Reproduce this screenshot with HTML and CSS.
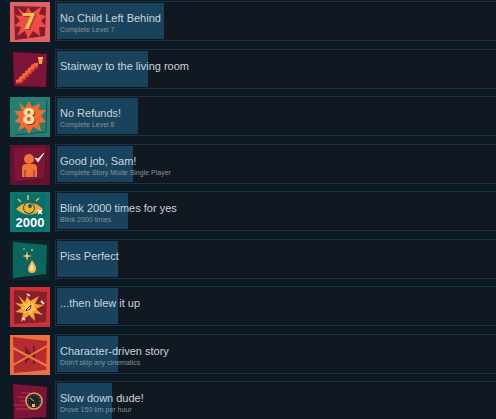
FILE: index.html
```html
<!DOCTYPE html>
<html lang="en">
<head>
<meta charset="utf-8">
<title>Achievements</title>
<link rel="stylesheet" href="styles.css">
</head>
<body>
<main class="achievements">
  <article class="row">
    <svg class="icon" viewBox="0 0 40 40" aria-hidden="true">
      <rect width="40" height="40" fill="#df6264"/>
      <path d="M4 4 36 5 35 34 5 38Z" fill="#851c2d"/>
      <path d="M7 5 15 12 18 5 22 11 32 4 29 12 36 14 31 19 37 25 29 25 30 34 23 29 18 37 15 29 7 34 11 25 4 24 10 19 5 13 12 14Z" fill="#ee4c49"/>
      <text class="digit shade" x="20" y="28">7</text>
      <text class="digit gold" x="19" y="27">7</text>
    </svg>
    <div class="box">
      <div class="bar" style="width:24.4%"></div>
      <div class="text"><h3>No Child Left Behind</h3><p>Complete Level 7</p></div>
    </div>
  </article>
  <article class="row">
    <svg class="icon" viewBox="0 0 40 40" aria-hidden="true">
      <rect width="40" height="40" fill="#1b131f"/>
      <path d="M3 2 37 4 36 37 4 36Z" fill="#7d1439"/>
      <path d="M6 34V30L9 29V27L12 26V24L15 23V21L18 20V18L21 17V15L24 14V13L28 13V18L25 19V21L22 22V24L19 25V27L16 28V30L13 31V33Z" fill="#c43a2c"/>
      <path d="M6 32V30L9 29V27L12 26V24L15 23V21L18 20V18L21 17V15L24 14V13L28 13V16L24 17V19L21 20V22L18 23V25L15 26V28L12 29V31L9 32Z" fill="#f5663c"/>
      <path d="M28 7H33L32 14H29Z" fill="#f5a33c"/>
      <path d="M28 7H33V9H28Z" fill="#ffc461"/>
    </svg>
    <div class="box">
      <div class="bar" style="width:20.8%"></div>
      <div class="text"><h3>Stairway to the living room</h3></div>
    </div>
  </article>
  <article class="row">
    <svg class="icon" viewBox="0 0 40 40" aria-hidden="true">
      <rect width="40" height="40" fill="#238078"/>
      <path d="M4 4 37 3 36 35 5 38Z" fill="#267e73"/>
      <path d="M5 38 36 35 37 3" fill="none" stroke="#11504f"/>
      <path d="M9 5 15 11 19 4 22 10 30 6 29 13 36 13 31 19 36 25 29 26 31 34 23 30 19 37 15 30 8 34 11 26 4 25 9 20 4 14 12 14Z" fill="#f36b34"/>
      <text class="digit shade" x="20" y="28">8</text>
      <text class="digit cream" x="19" y="27">8</text>
    </svg>
    <div class="box">
      <div class="bar" style="width:18.5%"></div>
      <div class="text"><h3>No Refunds!</h3><p>Complete Level 8</p></div>
    </div>
  </article>
  <article class="row">
    <svg class="icon" viewBox="0 0 40 40" aria-hidden="true">
      <rect width="40" height="40" fill="#65122f"/>
      <path d="M4 3 36 2 35 34 5 37Z" fill="#7d1539"/>
      <path d="M5 37 35 34 36 2" fill="none" stroke="#4b1028"/>
      <circle cx="19" cy="14" r="5" fill="#f27338"/>
      <path d="M12 32V23Q12 19 16 19H23Q27 19 27 23V32Z" fill="#f27338"/>
      <path d="M15 25V32M24 25V32" stroke="#8b2835"/>
      <path d="M25 13 28 17 34 8 28 14Z" fill="#f8d9cd" stroke="#f8d9cd"/>
    </svg>
    <div class="box">
      <div class="bar" style="width:17.4%"></div>
      <div class="text"><h3>Good job, Sam!</h3><p>Complete Story Mode Single Player</p></div>
    </div>
  </article>
  <article class="row">
    <svg class="icon" viewBox="0 0 40 40" aria-hidden="true">
      <rect width="40" height="40" fill="#0c7772"/>
      <path d="M4 3 36 2 35 37 5 38Z" fill="#0b6e6a"/>
      <path d="M6 17Q19 4 33 17Q19 28 6 17Z" fill="#edae39"/>
      <circle cx="19" cy="16" r="6" fill="#14605b"/>
      <circle cx="19" cy="16" r="5" fill="#f1ae36"/>
      <circle cx="20" cy="14" r="2" fill="#145f59"/>
      <path d="M18 3V8M8 7 11 10M29 6 26 9" stroke="#f0bf50" stroke-width="1.5"/>
      <path d="M28 18 32 22M32 18 28 22" stroke="#fff" stroke-width="1.5"/>
      <text class="count" x="20" y="35">2000</text>
    </svg>
    <div class="box">
      <div class="bar" style="width:16.2%"></div>
      <div class="text"><h3>Blink 2000 times for yes</h3><p>Blink 2000 times</p></div>
    </div>
  </article>
  <article class="row">
    <svg class="icon" viewBox="0 0 40 40" aria-hidden="true">
      <rect width="40" height="40" fill="#0d2529"/>
      <path d="M3 2 37 5 36 34 3 38Z" fill="#0c665f"/>
      <path d="M17 11 18 15 22 16 18 17 17 21 16 17 12 16 16 15Z" fill="#f7c46a"/>
      <circle cx="22" cy="10" r="1" fill="#9ccfc0"/>
      <circle cx="14" cy="9" r="1" fill="#68aca3"/>
      <path d="M22 20Q27 27 26 29A4 4 0 0 1 18 29Q18 27 22 20Z" fill="#f5b35d"/>
      <path d="M22 24Q25 29 22 31Q18 31 22 24Z" fill="#ffe7aa"/>
    </svg>
    <div class="box">
      <div class="bar" style="width:13.9%"></div>
      <div class="text"><h3>Piss Perfect</h3></div>
    </div>
  </article>
  <article class="row">
    <svg class="icon" viewBox="0 0 40 40" aria-hidden="true">
      <rect width="40" height="40" fill="#cf3037"/>
      <path d="M4 3 37 5 36 35 4 37Z" fill="#87202a"/>
      <path d="M8 8 15 15 17 9 20 14 29 9 25 17 34 18 26 22 33 28 24 26 25 34 19 28 11 35 13 26 5 25 12 21 5 16 13 17Z" fill="#f5a136"/>
      <path d="M12 16 17 17 19 12 21 17 25 16 23 20 27 23 22 24 21 28 18 25 13 27 15 23 10 21 15 20Z" fill="#ffc54e"/>
      <path d="M16 23 21 18 20 22 16 24Z" fill="#fff2c9" stroke="#6d2926"/>
      <path d="M17 7 20 9M31 14 34 17M12 31 15 33" stroke="#f6d2c6" stroke-width="2"/>
    </svg>
    <div class="box">
      <div class="bar" style="width:13.9%"></div>
      <div class="text"><h3>...then blew it up</h3></div>
    </div>
  </article>
  <article class="row">
    <svg class="icon" viewBox="0 0 40 40" aria-hidden="true">
      <rect width="40" height="40" fill="#ed7140"/>
      <path d="M3 2 37 6 36 35 4 38Z" fill="#b52b31"/>
      <path d="M15 11 23 20 15 29ZM23 11H25V29H23Z" fill="#72202a"/>
      <path d="M3 13 37 31M3 30 37 11" stroke="#f47a3c" stroke-width="2"/>
    </svg>
    <div class="box">
      <div class="bar" style="width:13.9%"></div>
      <div class="text"><h3>Character-driven story</h3><p>Didn't skip any cinematics</p></div>
    </div>
  </article>
  <article class="row">
    <svg class="icon" viewBox="0 0 40 40" aria-hidden="true">
      <rect width="40" height="40" fill="#1b131f"/>
      <path d="M3 2 37 5 36 35 4 37Z" fill="#7b1439"/>
      <path d="M11 11H20M7 15H17M10 19H16M4 23H17M6 27H24" stroke="#c2323f"/>
      <circle cx="24" cy="19" r="8" fill="#202529" stroke="#e9a052" stroke-width="1.5"/>
      <circle cx="24" cy="19" r="6" fill="none" stroke="#829177" stroke-dasharray="1 2"/>
      <path d="M24 19 20 16" stroke="#d9b77a"/>
      <path d="M22 22H25V25H22Z" fill="#e5bc6b"/>
    </svg>
    <div class="box">
      <div class="bar" style="width:12.6%"></div>
      <div class="text"><h3>Slow down dude!</h3><p>Drove 150 km per hour</p></div>
    </div>
  </article>
</main>
</body>
</html>
```
FILE: styles.css
```css
* {
  box-sizing: border-box;
}

body {
  margin: 0;
  overflow: hidden;
  background: #0e1a23;
  font-family: "Liberation Sans", Arial, sans-serif;
}

.achievements {
  padding: 1px 0 0 10px;
}

.row {
  display: flex;
  align-items: flex-start;
  gap: 5px;
  margin-bottom: 8px;
}

.row:nth-child(even) {
  margin-bottom: 7px;
}

.icon {
  flex: none;
  width: 40px;
  height: 40px;
  margin-top: 1px;
  margin-bottom: -1px;
}

.box {
  display: grid;
  flex: 1;
  min-width: 0;
  height: 40px;
  padding: 1px 0 1px 1px;
  border: 1px solid #1b3341;
  border-right: 0;
  background: #111821;
}

.bar,
.text {
  grid-area: 1 / 1;
}

.bar {
  background: #19435c;
}

.text {
  padding: 9px 0 0 3px;
  white-space: nowrap;
}

h3,
p {
  margin: 0;
  font-weight: 400;
}

h3 {
  color: #c8d5dc;
  font-size: 11px;
  line-height: 13px;
}

p {
  color: #84939d;
  font-size: 7px;
  line-height: 9px;
}

.digit {
  font-family: Roboto, sans-serif;
  font-size: 22px;
  font-weight: 900;
  text-anchor: middle;
}

.shade {
  fill: #9b3430;
}

.gold {
  fill: #f7c34d;
}

.cream {
  fill: #ffe0a0;
}

.count {
  fill: #fff;
  font-size: 13px;
  font-weight: 700;
  text-anchor: middle;
}
```
